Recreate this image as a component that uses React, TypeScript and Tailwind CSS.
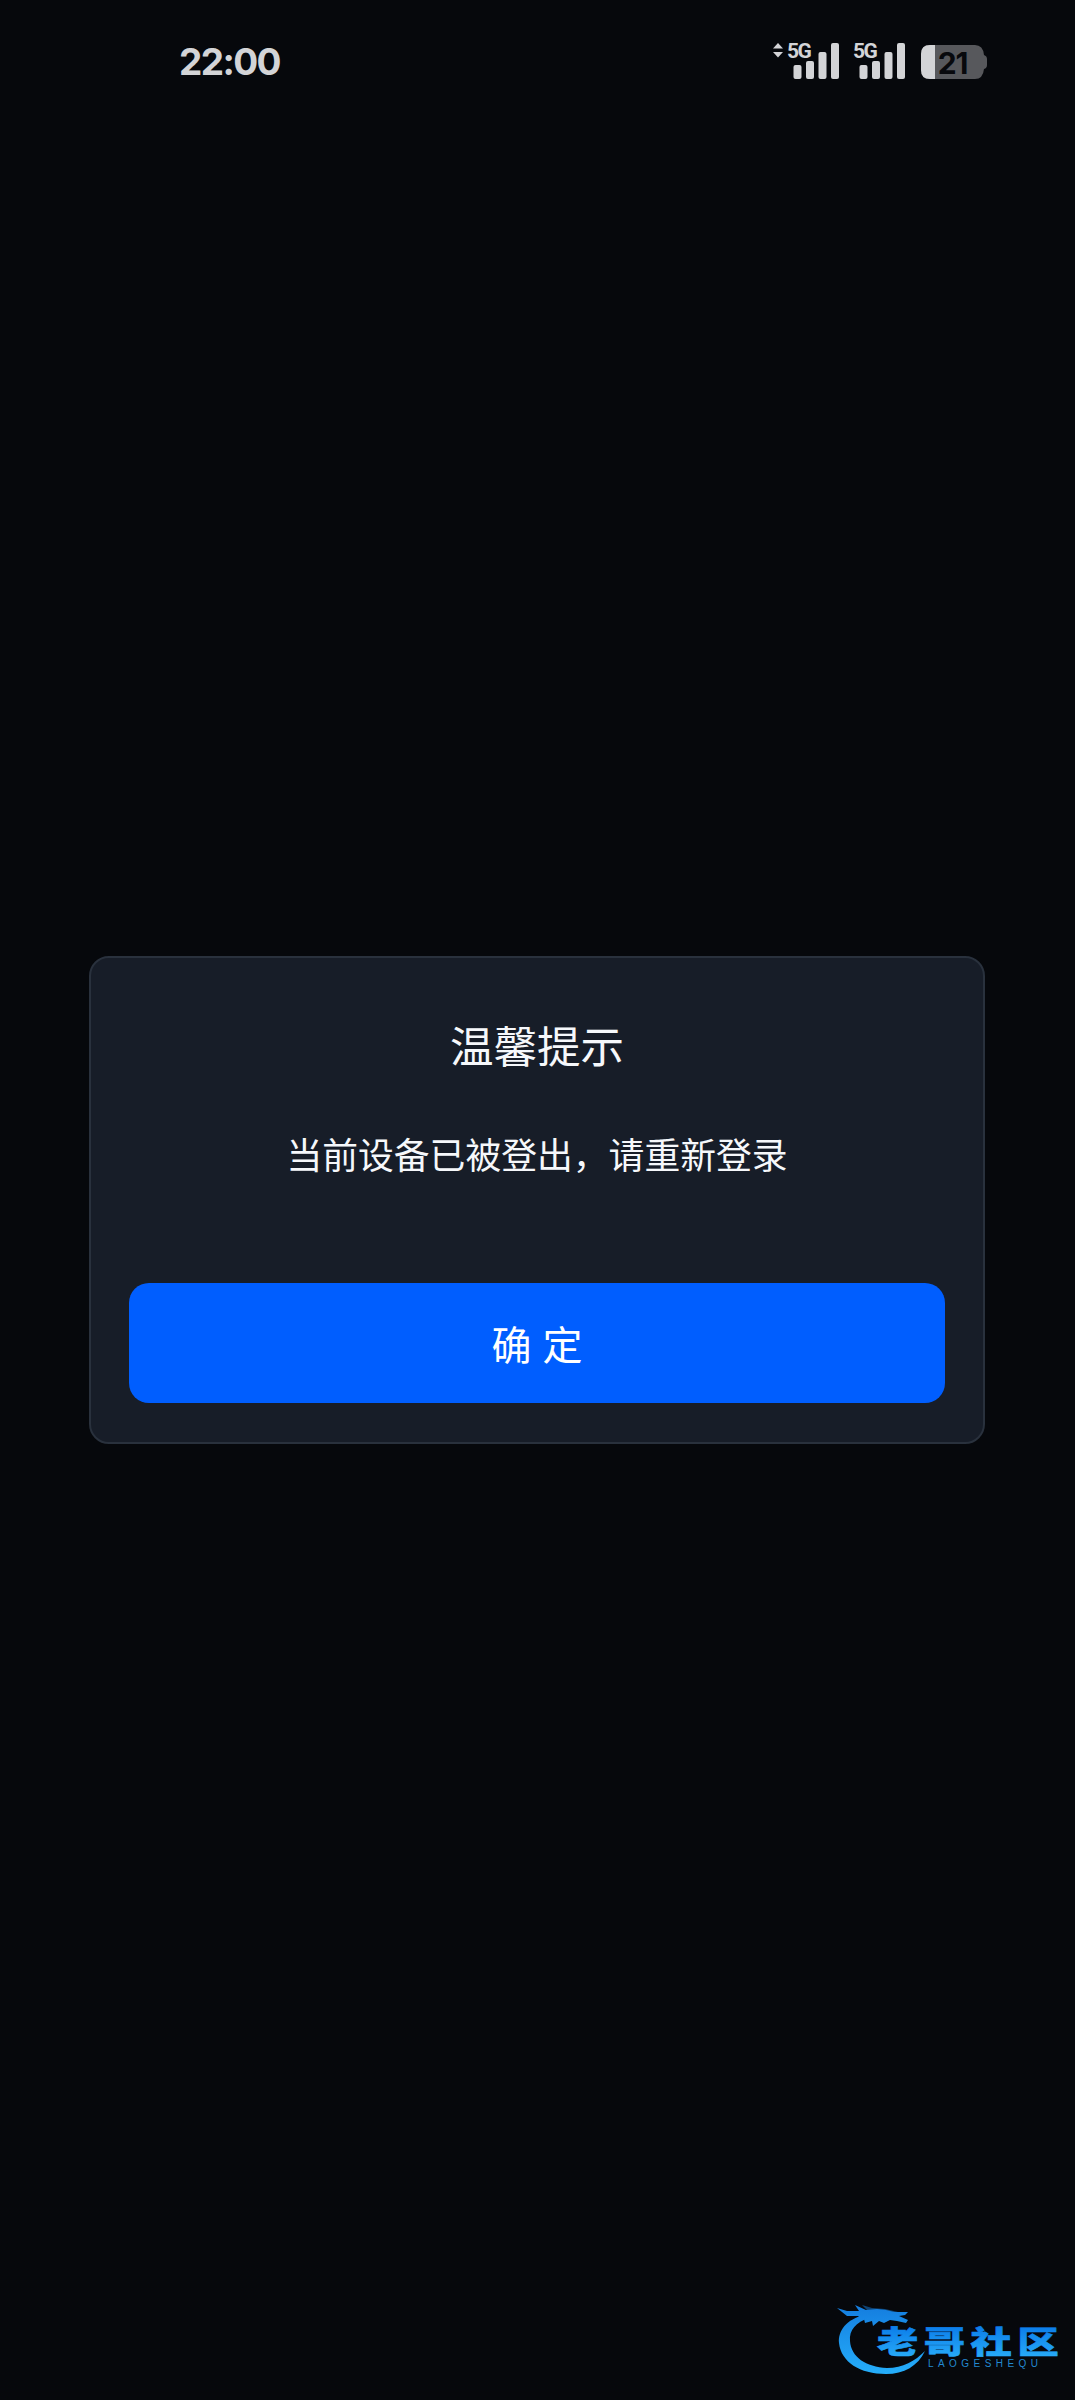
import React from "react";

function Signal() {
  return (
    <div className="relative h-9 w-[51px]">
      <span className="absolute left-[-1px] top-[-4px] font-['Roboto',sans-serif] text-[21px] leading-[24px] font-bold tracking-[-1.6px]">
        5G
      </span>
      <svg className="block" width="51" height="36" viewBox="0 0 51 36" fill="currentColor">
        <rect x="5.5" y="22" width="8" height="14" rx="2" />
        <rect x="18" y="18" width="8" height="18" rx="2" />
        <rect x="30.5" y="9" width="8" height="27" rx="2" />
        <rect x="43" y="0" width="8" height="36" rx="2" />
      </svg>
    </div>
  );
}

function Battery({ level }: { level: number }) {
  return (
    <div className="relative h-[34px] w-[66px]">
      <svg className="block" width="66" height="34" viewBox="0 0 66 34">
        <path d="M9 0H54Q62 0 63 10Q66 11 66 14V20Q66 23 63 24Q62 34 54 34H9Q0 34 0 25V9Q0 0 9 0Z" fill="#57585c" />
        <path d="M14 0V34H9Q0 34 0 25V9Q0 0 9 0Z" fill="#d3d4d7" />
      </svg>
      <span className="absolute inset-0 pr-[3px] text-center font-['Inter',sans-serif] text-[30px] leading-[36px] font-bold tracking-[-1.2px] text-[#08090d]">
        {level}
      </span>
    </div>
  );
}

function StatusBar() {
  return (
    <header className="flex h-[122px] items-start justify-between pt-[43px] pr-[88px] pl-[179px] text-[#d3d4d7]">
      <span className="font-['Inter',sans-serif] text-[37px] leading-[37px] font-bold tracking-[-1.6px]">22:00</span>
      <div className="flex items-start">
        <svg className="mr-[5px]" width="10" height="36" viewBox="0 0 10 36" fill="currentColor">
          <path d="M5 0L10 5.5H0Z" />
          <path d="M5 14.5L0 9H10Z" />
        </svg>
        <Signal />
        <div className="w-[15px]" />
        <Signal />
        <div className="w-[16px]" />
        <div className="pt-[2px]">
          <Battery level={21} />
        </div>
      </div>
    </header>
  );
}

function Watermark() {
  return (
    <svg className="absolute right-0 bottom-0" width="255" height="110" viewBox="0 0 255 110">
      <defs>
        <linearGradient id="ring" x1="0" y1="18" x2="0" y2="84" gradientUnits="userSpaceOnUse">
          <stop offset="0" stopColor="#157fe0" />
          <stop offset="1" stopColor="#25aefb" />
        </linearGradient>
        <linearGradient id="name" x1="0" y1="0" x2="0" y2="1">
          <stop offset="0.2" stopColor="#0b7ce9" />
          <stop offset="0.9" stopColor="#28acf8" />
        </linearGradient>
      </defs>
      <g fill="url(#ring)">
        <path d="M45 25C26 29 18 41 19 53C21 72 40 84 66 84C84 84 98 76 105 61C95 71 83 78 67 78C46 77 31 67 30 51C29 40 36 32 49 28Z" />
        <path d="M17 18L27 21L39 21L35 15L46 20L57 19L66 20L74 22L88 22L85 25L79 26L88 30L86 33L77 31L70 30L64 33L59 31L53 36L52 31L45 33L44 29L35 31L39 26L27 26Z" />
        <path d="M42 15L52 18L65 19L78 22L62 23L48 21Z" opacity="0.5" />
      </g>
      <text
        transform="translate(57 63) scale(1.33 1)"
        fontSize="31"
        fontWeight="900"
        letterSpacing="4.2"
        fill="url(#name)"
        stroke="url(#name)"
        strokeWidth="0.6"
        className="font-['Noto_Sans_CJK_SC',sans-serif]"
      >
        老哥社区
      </text>
      <text x="108" y="77" fontSize="10" textLength="110" fill="#2389d0" className="font-['Liberation_Sans',sans-serif]">
        LAOGESHEQU
      </text>
    </svg>
  );
}

export default function App() {
  return (
    <div className="relative flex h-[2400px] w-[1075px] flex-col overflow-hidden bg-[#06080c] font-['Noto_Sans_CJK_SC',sans-serif] text-[#f6f8fb]">
      <StatusBar />

      {/* Dialog */}
      <main className="flex grow flex-col items-center pt-[834px] pr-px">
        <section className="flex h-[488px] w-[896px] flex-col rounded-[20px] border-2 border-[#29313d] bg-[#171d28] px-[38px] pt-[55px] text-center">
          <h1 className="text-[43.5px] leading-[64px]">温馨提示</h1>
          <p className="mt-[49px] text-[35.8px] leading-[54px]">当前设备已被登出，请重新登录</p>
          <button className="mt-[103px] h-[120px] rounded-[20px] bg-[#005eff] text-[40px] leading-[118px] text-white [word-spacing:2px]">
            确 定
          </button>
        </section>
      </main>

      <Watermark />
    </div>
  );
}
